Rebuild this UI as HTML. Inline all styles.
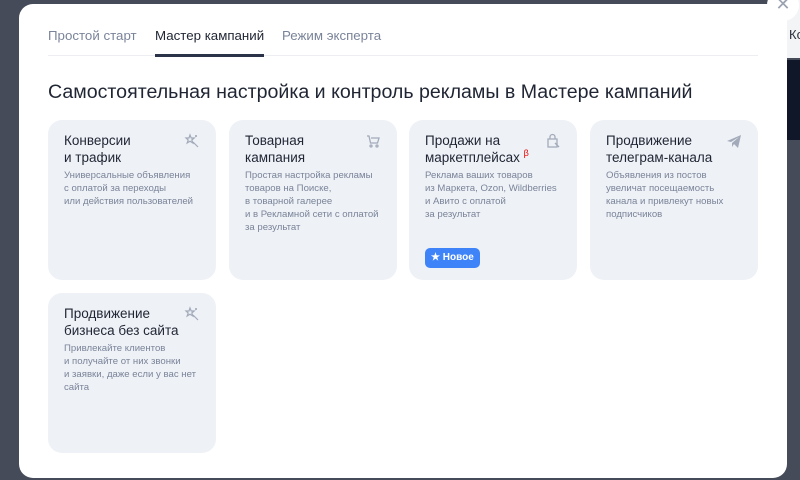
<!DOCTYPE html>
<html><head><meta charset="utf-8"><style>
*{margin:0;padding:0;box-sizing:border-box}
body{width:800px;height:480px;overflow:hidden;background:#454b59;font-family:"Liberation Sans",sans-serif;position:relative}
.bgband{position:absolute;left:787px;top:60px;width:13px;height:80px;background:#0f1729}
.bgtxt{position:absolute;left:789px;top:27px;font-size:13px;color:#2a2f3b}
.rightstrip{position:absolute;left:787px;top:0;width:13px;height:480px;background:linear-gradient(#f3f4f6 0,#f3f4f6 58px,transparent 58px)}
.modal{position:absolute;left:19px;top:4px;width:768px;height:474px;background:#fff;border-radius:14px}
.tabs{position:absolute;left:29px;top:24px;width:710px;height:28px;border-bottom:1px solid #eceef2;font-size:13.3px;color:#7a8499}
.tabs span{position:absolute;top:0}
.tabs .a{color:#1f2533}
.tabs .a:after{content:"";position:absolute;left:0;right:0;top:26px;height:3px;background:#2a3347}
h1{position:absolute;left:29px;top:77px;font-size:19.6px;font-weight:normal;color:#1f2533}
.card{position:absolute;width:168px;height:160px;background:#eef1f6;border-radius:14px;padding:12px 16px}
.t{font-size:13.5px;line-height:17px;color:#1f2533}
.d{font-size:9.6px;line-height:13px;color:#7a8499;margin-top:3px}
.ic{position:absolute;right:16px;top:13px;width:16px;height:16px}
.badge{position:absolute;left:16px;top:128px;width:55px;height:20px;background:#3e83f8;border-radius:5px;color:#fff;font-size:10px;font-weight:bold;line-height:20px;padding-left:6px}
.close{position:absolute;left:767px;top:-11px;width:32px;height:32px;border-radius:50%;background:#fff;color:#9aa2b1;font-size:18px;text-align:center;line-height:30px}
.beta{position:relative;top:-6px;color:#e00;font-size:9px;line-height:0}
</style></head><body>
<div class="rightstrip"></div>
<div class="bgband"></div>
<div class="bgtxt">Ко</div>
<div class="modal">
<div class="tabs"><span style="left:0">Простой старт</span><span class="a" style="left:107px">Мастер кампаний</span><span style="left:234px">Режим эксперта</span></div>
<h1>Самостоятельная настройка и контроль рекламы в Мастере кампаний</h1>
<div class="card" style="left:29px;top:116px"><div class="t">Конверсии<br>и трафик</div><div class="d">Универсальные объявления<br>с оплатой за переходы<br>или действия пользователей</div>
<svg class="ic" viewBox="0 0 16 16" fill="none" stroke="#a3abba" stroke-width="1.2"><path d="M6 2l1.2 3h3l-2.4 2 1 3-2.8-1.8L3.2 10l1-3L2 5h3z"/><path d="M9 9l5 5M12 2v2M11 3h2"/></svg></div>
<div class="card" style="left:210px;top:116px"><div class="t">Товарная<br>кампания</div><div class="d">Простая настройка рекламы<br>товаров на Поиске,<br>в товарной галерее<br>и в Рекламной сети с оплатой<br>за результат</div>
<svg class="ic" viewBox="0 0 16 16" fill="none" stroke="#a3abba" stroke-width="1.3"><path d="M2 3h2l1.5 7h7l1.5-5H6"/><circle cx="6" cy="13" r="1"/><circle cx="12" cy="13" r="1"/></svg></div>
<div class="card" style="left:390px;top:116px"><div class="t">Продажи на<br>маркетплейсах <span class="beta">β</span></div><div class="d">Реклама ваших товаров<br>из Маркета, Ozon, Wildberries<br>и Авито с оплатой<br>за результат</div>
<svg class="ic" viewBox="0 0 16 16" fill="none" stroke="#a3abba" stroke-width="1.3"><path d="M3 6h9v8H3zM5 6V4a2.5 2.5 0 015 0v2"/><path d="M10 10l4 4" /></svg>
<div class="badge">★ Новое</div></div>
<div class="card" style="left:571px;top:116px"><div class="t">Продвижение<br>телеграм-канала</div><div class="d">Объявления из постов<br>увеличат посещаемость<br>канала и привлекут новых<br>подписчиков</div>
<svg class="ic" viewBox="0 0 16 16"><path d="M1 8L15 2l-3 13-4-4-2 3V10l7-6-8 5z" fill="#a3abba"/></svg></div>
<div class="card" style="left:29px;top:289px"><div class="t">Продвижение<br>бизнеса без сайта</div><div class="d">Привлекайте клиентов<br>и получайте от них звонки<br>и заявки, даже если у вас нет<br>сайта</div>
<svg class="ic" viewBox="0 0 16 16" fill="none" stroke="#a3abba" stroke-width="1.2"><path d="M6 2l1.2 3h3l-2.4 2 1 3-2.8-1.8L3.2 10l1-3L2 5h3z"/><path d="M9 9l5 5M12 2v2M11 3h2"/></svg></div>
</div>
<div class="close">✕</div>
</body></html>
